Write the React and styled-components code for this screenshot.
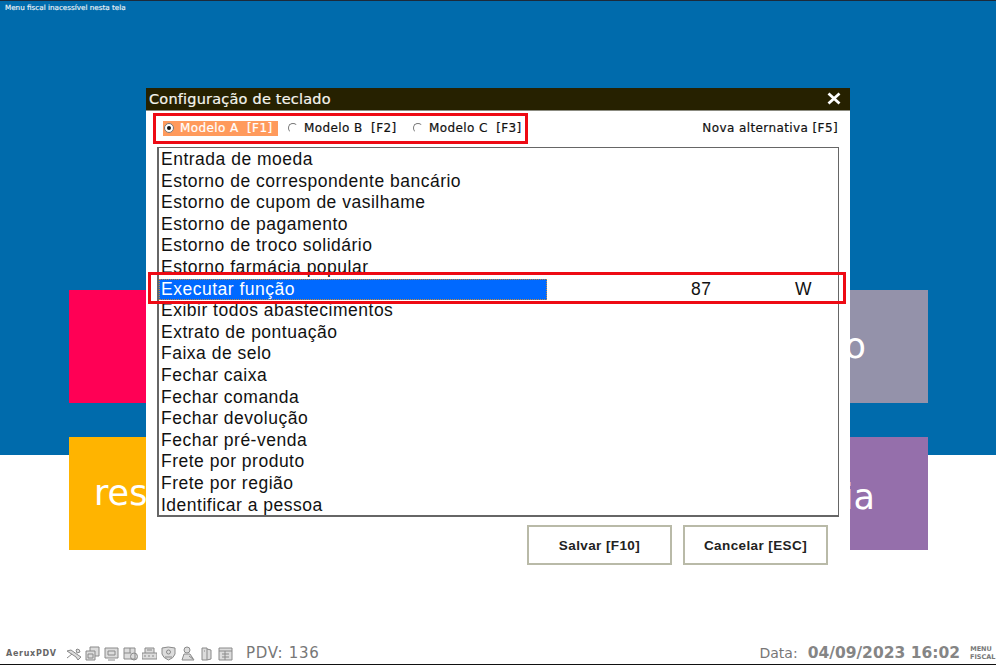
import styled, { createGlobalStyle } from "styled-components";

const GlobalStyle = createGlobalStyle`
    html, body {
        margin: 0;
        padding: 0;
        background: #fff;
    }
`;

const Page = styled.div`
    position: relative;
    width: 996px;
    height: 665px;
    overflow: hidden;
    background: #fff;
    border-bottom: 1px solid #111;
    box-sizing: border-box;
    font-family: "DejaVu Sans", sans-serif;
`;

const Hero = styled.div`
    height: 455px;
    box-sizing: border-box;
    background: #006bac;
    border-top: 1px solid #1c2a3a;
`;

const FiscalNote = styled.div`
    padding: 2px 0 0 5px;
    font-size: 7.2px;
    line-height: 10px;
    color: #eef4f8;
    -webkit-text-stroke: 0.15px #eef4f8;
`;

const Tiles = styled.div`
    position: absolute;
    top: 290px;
    left: 69px;
    width: 859px;
    display: grid;
    grid-template-columns: 200px 200px;
    grid-auto-rows: 113px;
    justify-content: space-between;
    row-gap: 34px;
`;

const Tile = styled.div`
    background: ${(p) => p.$color};
    color: #fff;
    font-size: 35px;
    line-height: 113px;
    padding: ${(p) => p.$pad || "0"};
    text-align: ${(p) => (p.$right ? "right" : "left")};
`;

const Dialog = styled.div`
    position: absolute;
    top: 88px;
    left: 146px;
    width: 704px;
    height: 488px;
    background: #fff;
`;

const TitleBar = styled.div`
    height: 22px;
    background: #262100;
    border-bottom: 1px solid #8b8b80;
    display: flex;
    align-items: center;
    justify-content: space-between;
    padding: 0 8px 0 3px;
    color: #f4f4ee;
    font-size: 14.5px;
    letter-spacing: 0.2px;
    -webkit-text-stroke: 0.2px #f4f4ee;
`;

const CloseIcon = styled.svg`
    width: 16px;
    height: 16px;
    display: block;
`;

const ModelBar = styled.div`
    height: 36px;
    display: flex;
    align-items: center;
    justify-content: space-between;
    padding: 0 12px 2px 17px;
    box-sizing: border-box;
    font-size: 12px;
    letter-spacing: 0.4px;
    color: #111;
    -webkit-text-stroke: 0.2px currentColor;
`;

const Models = styled.div`
    display: grid;
    grid-template-columns: repeat(3, 125px);
`;

const Model = styled.div`
    height: 15px;
    justify-self: start;
    display: flex;
    align-items: center;
    gap: 6px;
    padding: ${(p) => (p.$active ? "0 5px 0 1px" : "0")};
    white-space: pre;
    background: ${(p) => (p.$active ? "#ff9a5c" : "transparent")};
    color: ${(p) => (p.$active ? "#fff" : "#111")};
`;

const Radio = styled.span`
    position: relative;
    width: 10px;
    height: 10px;
    border-radius: 50%;
    box-sizing: border-box;
    background: #fff;
    border: 1px solid ${(p) => (p.$active ? "#777" : "#fff")};
    border-top-color: #777;
    border-left-color: #777;

    &::after {
        content: "";
        display: ${(p) => (p.$active ? "block" : "none")};
        position: absolute;
        top: 2px;
        left: 2px;
        width: 4px;
        height: 4px;
        border-radius: 50%;
        background: #111;
    }
`;

const ListBox = styled.div`
    margin: 0 11px 0 11px;
    height: 370px;
    padding-top: 1px;
    box-sizing: border-box;
    border: 1px solid #666;
    border-width: 1px 1px 2px 2px;
    overflow: hidden;
`;

const Row = styled.div`
    height: 21.6px;
    display: grid;
    grid-template-columns: 388px 144px 104px auto;
    font-family: "Liberation Sans", Arial, sans-serif;
    font-size: 17.5px;
    line-height: 21px;
    letter-spacing: 0.5px;
    color: #111;
`;

const RowName = styled.div`
    padding-left: 2px;
    box-sizing: border-box;
    white-space: nowrap;
    ${(p) =>
        p.$selected &&
        `
        background: #0069ff;
        color: #fff;
        outline: 1px dotted #c98a3a;
        outline-offset: -1px;
    `}
`;

const Actions = styled.div`
    display: flex;
    justify-content: flex-end;
    gap: 11px;
    margin: 8px 22px 0 0;
`;

const ActionButton = styled.div`
    width: 145px;
    height: 40px;
    box-sizing: border-box;
    border: 2px solid #b9baa8;
    display: flex;
    align-items: center;
    justify-content: center;
    font-family: "Liberation Sans", Arial, sans-serif;
    font-size: 13.5px;
    font-weight: 700;
    letter-spacing: 0.4px;
    color: #222;
`;

const Marker = styled.div`
    position: absolute;
    top: ${(p) => p.$top}px;
    left: ${(p) => p.$left}px;
    width: ${(p) => p.$width}px;
    height: ${(p) => p.$height}px;
    box-sizing: border-box;
    border: 3px solid #ee0a14;
`;

const StatusBar = styled.div`
    position: absolute;
    left: 0;
    right: 0;
    bottom: 0;
    height: 22px;
    display: flex;
    align-items: center;
    padding: 0 4px 0 6px;
    color: #777;
`;

const AppName = styled.div`
    font-size: 8px;
    font-weight: 700;
    letter-spacing: 0.7px;
    width: 60px;
    color: #666;
`;

const TrayIcons = styled.div`
    display: flex;
    gap: 4px;
    width: 180px;
`;

const Tray = styled.svg`
    width: 15px;
    height: 15px;
    display: block;
    fill: #dcdcdc;
    stroke: #8a8a8a;
    stroke-width: 1;
`;

const Pdv = styled.div`
    font-size: 15px;
    letter-spacing: 0.7px;
`;

const Clock = styled.div`
    margin-left: auto;
    display: flex;
    align-items: center;
    gap: 10px;
    font-size: 14px;
`;

const ClockValue = styled.span`
    font-weight: 700;
    font-size: 15.5px;
    color: #858585;
`;

const FiscalMenu = styled.div`
    margin-left: 10px;
    width: 22px;
    font-size: 6.5px;
    line-height: 8px;
    font-weight: 700;
    text-align: center;
`;

const models = [
    { label: "Modelo A  [F1]", active: true },
    { label: "Modelo B  [F2]" },
    { label: "Modelo C  [F3]" },
];

const rows = [
    { name: "Entrada de moeda" },
    { name: "Estorno de correspondente bancário" },
    { name: "Estorno de cupom de vasilhame" },
    { name: "Estorno de pagamento" },
    { name: "Estorno de troco solidário" },
    { name: "Estorno farmácia popular" },
    { name: "Executar função", code: "87", key: "W", selected: true },
    { name: "Exibir todos abastecimentos" },
    { name: "Extrato de pontuação" },
    { name: "Faixa de selo" },
    { name: "Fechar caixa" },
    { name: "Fechar comanda" },
    { name: "Fechar devolução" },
    { name: "Fechar pré-venda" },
    { name: "Frete por produto" },
    { name: "Frete por região" },
    { name: "Identificar a pessoa" },
];

// tray: tools, windows, monitor, box with gear, keyboard, shield, user, rolls, table
const trayPaths = [
    "M1 5l9 6 2 3 3-3-3-2-7-5zM1 12l5-4M11 3a3 3 0 013 3l-3 1-1-3z",
    "M1 5h9v9H1zM5 5V1h9v9h-4M3 8h5v4H3z",
    "M1 2h13v10H1zM4 5h7v4H4zM4 14h7",
    "M1 2h11v11H1zM1 7h7M7 2v5M11 7a3.5 3.5 0 110 7 3.5 3.5 0 010-7z",
    "M0 7h15v6H0zM3 7V2h9v5M5 4h5M2 10h2M6 10h2M10 10h2",
    "M1 2q6-2 13 0v6q-1 4-6.500 6Q2 12 1 8zM7.500 4a2 2 0 110 4 2 2 0 010-4zM4 11h7",
    "M7 1a3 3 0 110 6 3 3 0 010-6zM2 14l2-6h6l4 6zM9 10l4 3",
    "M3 2h5v12H3zM8 3l4 1v9l-4 1M5 5h1",
    "M1 2h13v12H1zM1 5h13M4 8h7M4 11h7M7 5v9",
];

function App() {
    return (
        <>
            <GlobalStyle />
            <Page>
                <Hero>
                    <FiscalNote>Menu fiscal inacessível nesta tela</FiscalNote>
                </Hero>
                <Tiles>
                    <Tile $color="#ff0055" />
                    <Tile $color="#9492aa" $right $pad="0 62px 0 0">o</Tile>
                    <Tile $color="#ffb400" $pad="0 0 0 25px">res</Tile>
                    <Tile $color="#956fab" $right $pad="4px 53px 0 0">ia</Tile>
                </Tiles>
                <Dialog>
                    <TitleBar>
                        <span>Configuração de teclado</span>
                        <CloseIcon viewBox="0 0 16 16">
                            <path d="M2.500 2.500l11 10M13.500 2.500l-11 10" stroke="#fff" strokeWidth="2.8" />
                        </CloseIcon>
                    </TitleBar>
                    <ModelBar>
                        <Models>
                            {models.map((m) => (
                                <Model key={m.label} $active={m.active}>
                                    <Radio $active={m.active} />
                                    {m.label}
                                </Model>
                            ))}
                        </Models>
                        <span>Nova alternativa [F5]</span>
                    </ModelBar>
                    <ListBox>
                        {rows.map((r) => (
                            <Row key={r.name}>
                                <RowName $selected={r.selected}>{r.name}</RowName>
                                <span />
                                <span>{r.code}</span>
                                <span>{r.key}</span>
                            </Row>
                        ))}
                    </ListBox>
                    <Actions>
                        <ActionButton>Salvar [F10]</ActionButton>
                        <ActionButton>Cancelar [ESC]</ActionButton>
                    </Actions>
                </Dialog>
                <Marker $top={113} $left={153} $width={375} $height={31} />
                <Marker $top={272} $left={148} $width={698} $height={32} />
                <StatusBar>
                    <AppName>AeruxPDV</AppName>
                    <TrayIcons>
                        {trayPaths.map((d) => (
                            <Tray key={d} viewBox="0 0 15 15">
                                <path d={d} />
                            </Tray>
                        ))}
                    </TrayIcons>
                    <Pdv>PDV: 136</Pdv>
                    <Clock>
                        Data:
                        <ClockValue>04/09/2023 16:02</ClockValue>
                    </Clock>
                    <FiscalMenu>MENU FISCAL</FiscalMenu>
                </StatusBar>
            </Page>
        </>
    );
}

export default App;
